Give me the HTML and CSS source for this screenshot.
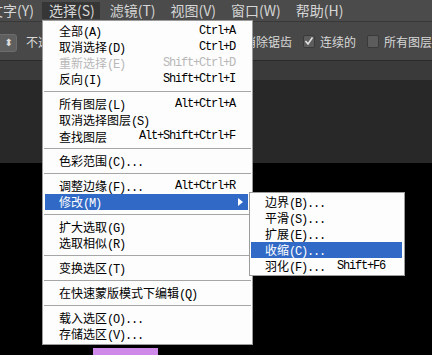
FILE: index.html
```html
<!DOCTYPE html>
<html lang="zh-CN">
<head>
  <meta charset="UTF-8" />
  <title>选择菜单</title>
  <link rel="stylesheet" href="styles.css">
</head>
<body>

  <!-- Menu bar -->
  <div class="menubar">
    <div class="mb-item first">文字(Y)</div>
    <div class="mb-item active">选择(S)</div>
    <div class="mb-item">滤镜(T)</div>
    <div class="mb-item">视图(V)</div>
    <div class="mb-item">窗口(W)</div>
    <div class="mb-item">帮助(H)</div>
  </div>

  <!-- Options bar -->
  <div class="options">
    <div class="dd"><span class="dd-arrows">&#x2B0D;</span></div>
    <span class="opt-text first-text">不透明度</span>
    <span class="chk checked first-chk"><svg width="10" height="10" viewBox="0 0 10 10"><path d="M1.5 5 L4 8 L8.5 1.5" fill="none" stroke="#e2e2e2" stroke-width="1.6"/></svg></span>
    <span class="opt-text">消除锯齿</span>
    <span class="chk checked"><svg width="10" height="10" viewBox="0 0 10 10"><path d="M1.5 5 L4 8 L8.5 1.5" fill="none" stroke="#e2e2e2" stroke-width="1.6"/></svg></span>
    <span class="opt-text">连续的</span>
    <span class="chk"></span>
    <span class="opt-text">所有图层</span>
  </div>

  <div class="tabs"></div>
  <div class="panel"></div>
  <div class="canvas">
    <div class="swatch"></div>
  </div>

  <!-- Select menu -->
  <div class="menu main-menu">
    <div class="item"><span>全部<span class="a">(A)</span></span><span class="a">Ctrl+A</span></div>
    <div class="item"><span>取消选择<span class="a">(D)</span></span><span class="a">Ctrl+D</span></div>
    <div class="item disabled"><span>重新选择<span class="a">(E)</span></span><span class="a">Shift+Ctrl+D</span></div>
    <div class="item"><span>反向<span class="a">(I)</span></span><span class="a">Shift+Ctrl+I</span></div>
    <div class="sep"></div>
    <div class="item"><span>所有图层<span class="a">(L)</span></span><span class="a">Alt+Ctrl+A</span></div>
    <div class="item"><span>取消选择图层<span class="a">(S)</span></span></div>
    <div class="item"><span>查找图层</span><span class="a">Alt+Shift+Ctrl+F</span></div>
    <div class="sep"></div>
    <div class="item"><span>色彩范围<span class="a">(C)...</span></span></div>
    <div class="sep"></div>
    <div class="item"><span>调整边缘<span class="a">(F)...</span></span><span class="a">Alt+Ctrl+R</span></div>
    <div class="item hl"><span>修改<span class="a">(M)</span></span><span class="arrow"></span></div>
    <div class="sep"></div>
    <div class="item"><span>扩大选取<span class="a">(G)</span></span></div>
    <div class="item"><span>选取相似<span class="a">(R)</span></span></div>
    <div class="sep"></div>
    <div class="item"><span>变换选区<span class="a">(T)</span></span></div>
    <div class="sep"></div>
    <div class="item"><span>在快速蒙版模式下编辑<span class="a">(Q)</span></span></div>
    <div class="sep"></div>
    <div class="item"><span>载入选区<span class="a">(O)...</span></span></div>
    <div class="item"><span>存储选区<span class="a">(V)...</span></span></div>
  </div>

  <!-- Modify submenu -->
  <div class="menu sub-menu">
    <div class="item"><span>边界<span class="a">(B)...</span></span></div>
    <div class="item"><span>平滑<span class="a">(S)...</span></span></div>
    <div class="item"><span>扩展<span class="a">(E)...</span></span></div>
    <div class="item hl"><span>收缩<span class="a">(C)...</span></span></div>
    <div class="item"><span>羽化<span class="a">(F)...</span></span><span class="a">Shift+F6</span></div>
  </div>

</body>
</html>
```

FILE: styles.css
```css
/* Global */
* {
  margin: 0;
  padding: 0;
  box-sizing: border-box;
}

body {
  width: 432px;
  height: 355px;
  overflow: hidden;
  background: #000;
  font-family: "Noto Sans CJK SC", sans-serif;
  position: relative;
}

/* Menu bar */
.menubar {
  height: 22px;
  background: #4b4b4b;
  border-bottom: 1px solid #383838;
  display: flex;
  align-items: center;
  overflow: hidden;
  white-space: nowrap;
}

.mb-item {
  flex-shrink: 0;
  height: 17px;
  line-height: 17px;
  padding: 0 5px 0 7px;
  margin-right: 3px;
  font-size: 14px;
  color: #d6d6d6;
}

.mb-item.first {
  margin-left: -18px;
}

.mb-item.active {
  background: #363636;
}

/* Options bar */
.options {
  height: 39px;
  background: #484848;
  border-bottom: 1px solid #2a2a2a;
  display: flex;
  align-items: center;
  white-space: nowrap;
  overflow: hidden;
  font-size: 12px;
  color: #d8d8d8;
}

.options > * {
  flex-shrink: 0;
}

.dd {
  width: 20px;
  height: 18px;
  margin-left: -3px;
  margin-top: 3px;
  background: #5f5f5f;
  border: 1px solid #6c6c6c;
  border-radius: 3px;
  display: flex;
  align-items: center;
  justify-content: flex-end;
  padding-right: 3px;
}

.dd-arrows {
  font-family: "DejaVu Sans", sans-serif;
  font-size: 10px;
  color: #e0e0e0;
}

.opt-text {
  margin-right: 11px;
}

.first-text {
  margin-left: 9px;
}

.chk {
  width: 12px;
  height: 13px;
  margin-right: 5px;
  background: #5c5c5c;
  border: 1px solid #3a3a3a;
  border-radius: 2px;
  display: flex;
  align-items: center;
  justify-content: center;
}

.first-chk {
  margin-left: 142px;
}

.tabs {
  height: 19px;
  background: #3a3a3a;
}

.panel {
  height: 83px;
  background: #282828;
}

.canvas {
  height: 193px;
  background: #000;
  padding-top: 185px;
}

.swatch {
  width: 65px;
  height: 10px;
  margin-left: 93px;
  background: #cf8ae9;
}

/* Dropdown menus */
.menu {
  position: absolute;
  background: #fdfdfd;
  border: 1px solid #9c9c9c;
  font-size: 12px;
  color: #000;
  white-space: nowrap;
}

.main-menu {
  left: 42px;
  top: 20px;
  width: 211px;
  padding: 2px 4px 2px 2px;
}

.sub-menu {
  left: 249px;
  top: 192px;
  width: 156px;
  padding: 1px 2px 1px 1px;
}

.item {
  height: 16px;
  display: flex;
  justify-content: space-between;
  align-items: center;
  padding: 0 13px 0 14px;
}

.sub-menu .item {
  padding-right: 17px;
}

.item .a {
  font-family: "Liberation Mono", monospace;
  font-size: 12px;
  letter-spacing: -1.2px;
}

.item.disabled {
  color: #b8b8b8;
}

.item.hl {
  background: #3169c6;
  color: #fff;
}

.arrow {
  width: 0;
  height: 0;
  margin-right: -8px;
  border-left: 5px solid #fff;
  border-top: 4px solid transparent;
  border-bottom: 4px solid transparent;
}

.sep {
  height: 9px;
  margin: 0 -3px 0 -1px;
  padding-top: 4px;
}

.sep::before {
  content: "";
  display: block;
  height: 1px;
  background: #a6a6a6;
}
```
